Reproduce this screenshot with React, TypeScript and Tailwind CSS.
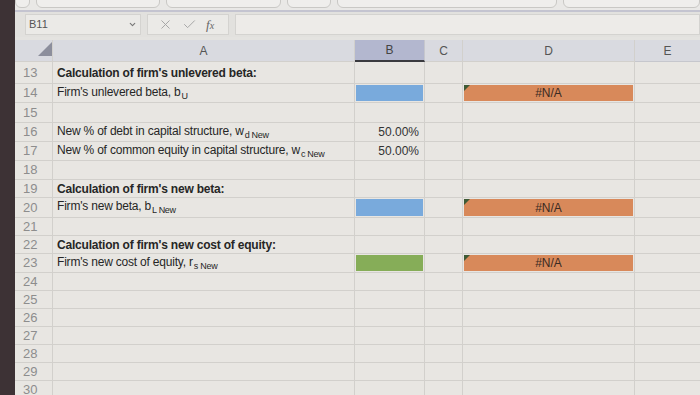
import { X, Check, ChevronDown } from 'lucide-react';

type Fill = 'blue' | 'green' | 'orange' | null;

interface Row {
  n: number;
  a?: React.ReactNode;
  bold?: boolean;
  b?: string;
  bFill?: Fill;
  dFill?: Fill;
  h: string;
}

function Sub({ children }: { children: React.ReactNode }) {
  return <span className="text-[9px] font-normal align-[-3px] ml-[1px] tracking-[-0.3px]">{children}</span>;
}

const rows: Row[] = [
  { n: 13, a: "Calculation of firm's unlevered beta:", bold: true, h: 'h-[22px]' },
  { n: 14, a: <>Firm's unlevered beta, b<Sub>U</Sub></>, bFill: 'blue', dFill: 'orange', h: 'h-[19px]' },
  { n: 15, h: 'h-[20px]' },
  { n: 16, a: <>New % of debt in capital structure, w<Sub>d New</Sub></>, b: '50.00%', h: 'h-[19px]' },
  { n: 17, a: <>New % of common equity in capital structure, w<Sub>c New</Sub></>, b: '50.00%', h: 'h-[19px]' },
  { n: 18, h: 'h-[19px]' },
  { n: 19, a: "Calculation of firm's new beta:", bold: true, h: 'h-[18px]' },
  { n: 20, a: <>Firm's new beta, b<Sub>L New</Sub></>, bFill: 'blue', dFill: 'orange', h: 'h-[20px]' },
  { n: 21, h: 'h-[18px]' },
  { n: 22, a: "Calculation of firm's new cost of equity:", bold: true, h: 'h-[18px]' },
  { n: 23, a: <>Firm's new cost of equity, r<Sub>s New</Sub></>, bFill: 'green', dFill: 'orange', h: 'h-[19px]' },
  { n: 24, h: 'h-[18px]' },
  { n: 25, h: 'h-[18px]' },
  { n: 26, h: 'h-[18px]' },
  { n: 27, h: 'h-[18px]' },
  { n: 28, h: 'h-[18px]' },
  { n: 29, h: 'h-[18px]' },
  { n: 30, h: 'h-[18px]' },
];

const fillClass: Record<string, string> = {
  blue: 'bg-[#79aadc]',
  green: 'bg-[#86ad58]',
  orange: 'bg-[#d8895a]',
};

const cell = 'border-r border-b border-[#d2d0cc]';

export default function App() {
  return (
    <div className="w-[700px] h-[395px] overflow-hidden flex bg-[#e8e6e2] font-['Liberation_Sans',Arial,sans-serif]">
      {/* Dark bezel */}
      <div className="w-[15px] shrink-0 bg-[#3d3235]" />

      <div className="flex-1 flex flex-col min-w-0">
        {/* Toolbar remains */}
        <div className="h-[10px] shrink-0 flex gap-[6px] overflow-hidden bg-[#e9e8e6]">
          <div className="w-[15px] h-[20px] -mt-[12px] rounded-md border border-[#c9c8c5] bg-[#efeeec]" />
          <div className="w-[124px] h-[20px] -mt-[12px] rounded-md border border-[#c9c8c5] bg-[#efeeec]" />
          <div className="w-[115px] h-[20px] -mt-[12px] rounded-md border border-[#c9c8c5] bg-[#efeeec]" />
          <div className="w-[44px] h-[20px] -mt-[12px] rounded-md border border-[#c9c8c5] bg-[#efeeec]" />
          <div className="w-[220px] h-[20px] -mt-[12px] rounded-md border border-[#c9c8c5] bg-[#efeeec]" />
          <div className="flex-1 h-[20px] -mt-[12px] rounded-md border border-[#c9c8c5] bg-[#efeeec]" />
        </div>
        <div className="h-[2px] shrink-0 bg-[#c4c4d0]" />

        {/* Formula bar */}
        <div className="h-[25px] shrink-0 flex items-center gap-[6px] pl-[10px] bg-[#e2e1de]">
          <div className="w-[116px] h-[21px] flex items-center justify-between px-[3px] bg-[#ebeae7] border border-[#d4d3d0]">
            <span className="text-[11px] text-[#555]">B11</span>
            <ChevronDown className="w-[9px] h-[9px] text-[#777]" strokeWidth={3} />
          </div>
          <div className="w-[82px] h-[21px] flex items-center gap-[9px] px-[10px] bg-[#ebeae7] border border-[#d4d3d0]">
            <X className="w-[15px] h-[15px] text-[#a2a2a2]" strokeWidth={1.5} />
            <Check className="w-[15px] h-[15px] text-[#a2a2a2]" strokeWidth={1.5} />
            <span className="font-['Liberation_Serif',serif] italic text-[13px] text-[#666] leading-none">
              f<span className="text-[10px]">x</span>
            </span>
          </div>
          <div className="flex-1 h-[21px] bg-[#edebe8] border border-[#d4d3d0]" />
        </div>
        <div className="h-[3px] shrink-0 bg-[#e4e3e0]" />

        {/* Sheet */}
        <div className="shrink-0 grid grid-cols-[38px_302px_70px_38px_172px_1fr] text-[12px] text-[#262626]">
          {/* Column headers */}
          <div className={`h-[22px] bg-[#d9dae0] ${cell} border-[#c6c7cd] flex items-end pl-[23px] pb-[5px]`}>
            <div className="w-0 h-0 border-l-[14px] border-l-transparent border-b-[14px] border-b-[#8c8e9c]" />
          </div>
          <div className={`h-[22px] bg-[#d9dae0] ${cell} border-[#c6c7cd] flex items-center justify-center text-[#555]`}>A</div>
          <div className="h-[22px] bg-[#b3b7cf] border-r border-b-2 border-r-[#c6c7cd] border-b-[#3a3a3f] flex items-center justify-center text-[#444]">B</div>
          <div className={`h-[22px] bg-[#d9dae0] ${cell} border-[#c6c7cd] flex items-center justify-center text-[#555]`}>C</div>
          <div className={`h-[22px] bg-[#d9dae0] ${cell} border-[#c6c7cd] flex items-center justify-center text-[#555]`}>D</div>
          <div className="h-[22px] bg-[#d9dae0] border-b border-[#c6c7cd] flex items-center justify-center text-[#555]">E</div>

          {rows.map((r) => (
            <div key={r.n} className="contents">
              <div className={`${r.h} ${cell} flex items-center pl-[8px] text-[#8d8d8d] text-[13px]`}>{r.n}</div>
              <div className={`${r.h} ${cell} flex items-center pl-[4px] whitespace-nowrap tracking-[-0.2px] ${r.bold ? 'font-bold' : ''}`}>
                <span>{r.a}</span>
              </div>
              <div className={`${r.h} ${cell} flex items-center justify-end p-[1px]`}>
                {r.bFill ? (
                  <div className={`w-full h-full ${fillClass[r.bFill]}`} />
                ) : (
                  <span className="pr-[4px] text-[#333]">{r.b}</span>
                )}
              </div>
              <div className={`${r.h} ${cell}`} />
              <div className={`${r.h} ${cell} p-[1px]`}>
                {r.dFill && (
                  <div className={`relative w-full h-full ${fillClass[r.dFill]} flex items-center justify-center text-[#3a2a22]`}>
                    <div className="absolute top-0 left-0 w-0 h-0 border-t-[6px] border-t-[#3d5a35] border-r-[6px] border-r-transparent" />
                    #N/A
                  </div>
                )}
              </div>
              <div className={`${r.h} border-b border-[#d2d0cc]`} />
            </div>
          ))}
        </div>
      </div>
    </div>
  );
}
